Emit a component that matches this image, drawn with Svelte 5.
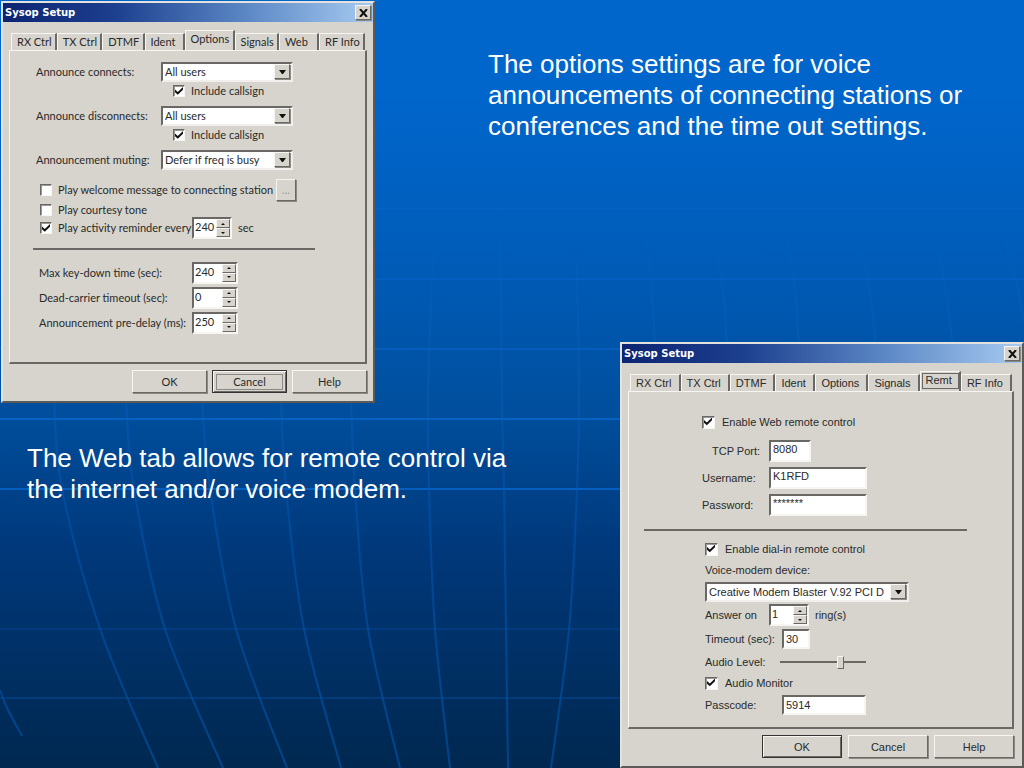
<script>
  const optionTabs = ['RX Ctrl', 'TX Ctrl', 'DTMF', 'Ident', 'Options', 'Signals', 'Web', 'RF Info'];
  const remoteTabs = ['RX Ctrl', 'TX Ctrl', 'DTMF', 'Ident', 'Options', 'Signals', 'Remt', 'RF Info'];

  let optionTab = $state('Options');
  let remoteTab = $state('Remt');

  let options = $state({
    connects: 'All users',
    connectsCall: true,
    disconnects: 'All users',
    disconnectsCall: true,
    muting: 'Defer if freq is busy',
    welcome: false,
    courtesy: false,
    reminder: true,
    reminderSec: 240,
    keyDown: 240,
    deadCarrier: 0,
    preDelay: 250
  });

  let remote = $state({
    web: true,
    port: '8080',
    username: 'K1RFD',
    password: '*******',
    dialIn: true,
    device: 'Creative Modem Blaster V.92 PCI D',
    rings: 1,
    timeout: '30',
    level: 72,
    monitor: true,
    passcode: '5914'
  });

  // background grid
  const rows = [
    { y: 140, o: 0.1 }, { y: 209, o: 0.4 }, { y: 279, o: 0.5 }, { y: 349, o: 0.6 },
    { y: 419, o: 0.8 }, { y: 489, o: 0.8 }, { y: 629, o: 0.2 }, { y: 698, o: 0.25 }
  ];
  const columns = [
    [[54, 400], [62, 489], [100, 629], [158, 768]],
    [[126, 400], [134, 489], [165, 629], [223, 768]],
    [[202, 400], [210, 489], [236, 629], [287, 768]],
    [[281, 400], [286, 489], [304, 629], [341, 768]],
    [[351, 400], [355, 489], [368, 629], [400, 768]],
    [[436, 220], [432, 280], [428, 400], [429, 489], [435, 629], [450, 768]],
    [[500, 200], [502, 400], [504, 489], [506, 629], [508, 768]],
    [[574, 220], [577, 280], [579, 400], [577, 489], [569, 629], [551, 768]],
    [[644, 220], [651, 280], [655, 345]],
    [[709, 220], [722, 280], [727, 345]],
    [[782, 220], [794, 280], [799, 345]],
    [[856, 220], [868, 280], [876, 345]],
    [[930, 220], [944, 280], [953, 345]],
    [[1000, 220], [1016, 280], [1024, 322]],
    [[0, 690], [7, 708], [22, 736]]
  ];

  function curve(points) {
    let d = `M${points[0]}`;
    for (let i = 0; i < points.length - 1; i++) {
      const a = points[i - 1] ?? points[i];
      const b = points[i];
      const c = points[i + 1];
      const e = points[i + 2] ?? c;
      d += ` C${b[0] + (c[0] - a[0]) / 6} ${b[1] + (c[1] - a[1]) / 6}`;
      d += ` ${c[0] - (e[0] - b[0]) / 6} ${c[1] - (e[1] - b[1]) / 6} ${c[0]} ${c[1]}`;
    }
    return d;
  }
</script>

{#snippet titleBar()}
  <header class="title-bar">
    <h2>Sysop Setup</h2>
    <button class="raised close" type="button" aria-label="Close">
      <svg viewBox="0 0 9 8" width="9" height="8"><path d="M1 0 L8 8 M8 0 L1 8" stroke="#111" stroke-width="2" /></svg>
    </button>
  </header>
{/snippet}

{#snippet tabStrip(tabs, active, focused, select)}
  <div class="tabs" role="tablist">
    {#each tabs as tab}
      <button
        class="tab"
        class:active={tab === active}
        class:focused={tab === active && focused}
        type="button"
        role="tab"
        aria-selected={tab === active}
        onclick={() => select(tab)}
      >{tab}</button>
    {/each}
  </div>
{/snippet}

{#snippet check(data, key, text)}
  <label class="check">
    <input type="checkbox" bind:checked={data[key]} />
    {text}
  </label>
{/snippet}

{#snippet combo(id, data, key, choices)}
  <div class="combo">
    <select {id} bind:value={data[key]}>
      {#each choices as choice}
        <option value={choice}>{choice}</option>
      {/each}
    </select>
    <span class="raised arrow">
      <svg viewBox="0 0 7 4" width="7" height="4"><path d="M0 0 H7 L4 4 H3 Z" fill="#111" /></svg>
    </span>
  </div>
{/snippet}

{#snippet spinner(id, data, key, narrow)}
  <div class="spinner" class:narrow>
    <input {id} type="number" bind:value={data[key]} />
    <div class="spin-buttons">
      <button class="raised" type="button" aria-label="Increase" onclick={() => data[key]++}>
        <svg viewBox="0 0 4 2" width="4" height="2"><path d="M0 2 L2 0 L4 2 Z" fill="#111" /></svg>
      </button>
      <button class="raised" type="button" aria-label="Decrease" onclick={() => data[key]--}>
        <svg viewBox="0 0 4 2" width="4" height="2"><path d="M0 0 L2 2 L4 0 Z" fill="#111" /></svg>
      </button>
    </div>
  </div>
{/snippet}

<main class="slide">
  <svg class="backdrop" viewBox="0 0 1024 768" preserveAspectRatio="none" aria-hidden="true">
    <defs>
      <linearGradient id="fade" gradientUnits="userSpaceOnUse" x1="0" y1="200" x2="0" y2="768">
        <stop offset="0" stop-color="#0b66c8" stop-opacity="0" />
        <stop offset="0.25" stop-color="#0b66c8" stop-opacity="0.3" />
        <stop offset="0.6" stop-color="#0058b4" stop-opacity="0.5" />
        <stop offset="1" stop-color="#004c98" stop-opacity="0.8" />
      </linearGradient>
    </defs>
    {#each rows as row}
      <rect x="0" y={row.y - 1} width="1024" height="2" fill="#0866cc" opacity={row.o} />
    {/each}
    {#each columns as points}
      <path d={curve(points)} fill="none" stroke="url(#fade)" stroke-width="2" />
    {/each}
  </svg>

  <div class="left">
    <section class="dialog options">
      {@render titleBar()}
      <div class="body">
        {@render tabStrip(optionTabs, optionTab, false, (t) => (optionTab = t))}
        <div class="panel">
          <div class="row">
            <label for="connects">Announce connects:</label>
            {@render combo('connects', options, 'connects', ['All users', 'None'])}
          </div>
          <div class="row sub">{@render check(options, 'connectsCall', 'Include callsign')}</div>
          <div class="row">
            <label for="disconnects">Announce disconnects:</label>
            {@render combo('disconnects', options, 'disconnects', ['All users', 'None'])}
          </div>
          <div class="row sub">{@render check(options, 'disconnectsCall', 'Include callsign')}</div>
          <div class="row">
            <label for="muting">Announcement muting:</label>
            {@render combo('muting', options, 'muting', ['Defer if freq is busy', 'None'])}
          </div>

          <div class="row welcome">
            {@render check(options, 'welcome', 'Play welcome message to connecting station')}
            <button class="raised browse" type="button" disabled>...</button>
          </div>
          <div class="row courtesy">{@render check(options, 'courtesy', 'Play courtesy tone')}</div>
          <div class="row reminder">
            {@render check(options, 'reminder', 'Play activity reminder every')}
            {@render spinner('reminder-sec', options, 'reminderSec', true)}
            <label class="unit" for="reminder-sec">sec</label>
          </div>

          <hr />

          <div class="row timer">
            <label for="key-down">Max key-down time (sec):</label>
            {@render spinner('key-down', options, 'keyDown', false)}
          </div>
          <div class="row timer">
            <label for="dead-carrier">Dead-carrier timeout (sec):</label>
            {@render spinner('dead-carrier', options, 'deadCarrier', false)}
          </div>
          <div class="row timer">
            <label for="pre-delay">Announcement pre-delay (ms):</label>
            {@render spinner('pre-delay', options, 'preDelay', false)}
          </div>
        </div>
        <footer>
          <button class="raised" type="button">OK</button>
          <button class="raised default" type="button"><span class="focus">Cancel</span></button>
          <button class="raised" type="button">Help</button>
        </footer>
      </div>
    </section>

    <p class="note">The Web tab allows for remote control via the internet and/or voice modem.</p>
  </div>

  <div class="right">
    <p class="note">The options settings are for voice announcements of connecting stations or conferences and the time out settings.</p>

    <section class="dialog remote">
      {@render titleBar()}
      <div class="body">
        {@render tabStrip(remoteTabs, remoteTab, true, (t) => (remoteTab = t))}
        <div class="panel">
          <div class="row">{@render check(remote, 'web', 'Enable Web remote control')}</div>
          <div class="row field">
            <label class="right-label" for="port">TCP Port:</label>
            <input class="text short" id="port" type="text" bind:value={remote.port} />
          </div>
          <div class="row field">
            <label for="username">Username:</label>
            <input class="text long" id="username" type="text" bind:value={remote.username} />
          </div>
          <div class="row field">
            <label for="password">Password:</label>
            <input class="text long" id="password" type="text" bind:value={remote.password} />
          </div>

          <hr />

          <div class="dial-in">
            <div class="row slim">{@render check(remote, 'dialIn', 'Enable dial-in remote control')}</div>
            <div class="row"><label for="device">Voice-modem device:</label></div>
            <div class="row device">
              {@render combo('device', remote, 'device', ['Creative Modem Blaster V.92 PCI D'])}
            </div>
            <div class="row answer">
              <label for="rings">Answer on</label>
              {@render spinner('rings', remote, 'rings', true)}
              <label class="unit" for="rings">ring(s)</label>
            </div>
            <div class="row wide">
              <label for="timeout">Timeout (sec):</label>
              <input class="text tiny" id="timeout" type="text" bind:value={remote.timeout} />
            </div>
            <div class="row level">
              <label for="level">Audio Level:</label>
              <input class="slider" id="level" type="range" min="0" max="100" bind:value={remote.level} />
            </div>
            <div class="row slim">{@render check(remote, 'monitor', 'Audio Monitor')}</div>
            <div class="row wide">
              <label for="passcode">Passcode:</label>
              <input class="text medium" id="passcode" type="text" bind:value={remote.passcode} />
            </div>
          </div>
        </div>
        <footer>
          <button class="raised default" type="button">OK</button>
          <button class="raised" type="button">Cancel</button>
          <button class="raised" type="button">Help</button>
        </footer>
      </div>
    </section>
  </div>
</main>

<style>
  :global(body) {
    margin: 0;
    background: #002850;
  }

  .slide {
    position: relative;
    box-sizing: border-box;
    min-height: 100vh;
    display: grid;
    /* the two halves share the middle strip */
    grid-template-columns: minmax(0, 1fr) 48px minmax(0, 1fr);
    background: linear-gradient(#0066cc 0%, #0066cc 12%, #005cb8 34%, #004f9e 53%, #00387a 72%, #002850 100%);
    font-family: "Liberation Sans", Arial, sans-serif;
    overflow: hidden;
  }

  .backdrop {
    position: absolute;
    inset: 0;
    width: 100%;
    height: 100%;
  }

  .left,
  .right {
    position: relative;
    grid-row: 1;
    display: flex;
    flex-direction: column;
  }

  .left {
    grid-column: 1 / 3;
  }

  .right {
    grid-column: 2 / 4;
    justify-content: space-between;
  }

  .note {
    margin: 0;
    color: #fff;
    font-size: 26px;
    line-height: 31px;
  }

  .left .note {
    padding: 40px 8px 0 27px;
  }

  .right .note {
    padding: 49px 40px 0 0;
  }

  /* dialogs */
  .dialog {
    border: 2px solid;
    border-color: #e4e2dc #5c5a56 #5c5a56 #e4e2dc;
    background: #d6d4cd;
    color: #2a2a2a;
    font: 11px/14px "Liberation Sans", Arial, sans-serif;
  }

  .dialog.options {
    margin: 1px 161px 0 1px;
    font-family: Lato, "Liberation Sans", sans-serif;
  }

  .dialog.remote {
    margin-left: 132px;
  }

  .dialog button,
  .dialog input,
  .dialog select {
    font: inherit;
    color: inherit;
    box-sizing: border-box;
    margin: 0;
  }

  .title-bar {
    display: flex;
    align-items: center;
    justify-content: space-between;
    height: 19px;
    padding: 0 2px;
    background: linear-gradient(90deg, #0c2472 0%, #1c3f8e 30%, #5a86c4 65%, #a6caf0 100%);
  }

  .title-bar h2 {
    margin: 0;
    color: #fff;
    font: bold 10px "DejaVu Sans", Verdana, sans-serif;
  }

  .raised {
    border: 1px solid;
    border-color: #f6f5f2 #6a6864 #6a6864 #f6f5f2;
    box-shadow: 1px 1px 0 #8c8a85;
    background: #d6d4cd;
    padding: 0;
    display: flex;
    align-items: center;
    justify-content: center;
  }

  .close {
    width: 16px;
    height: 15px;
  }

  .body {
    padding: 8px 6px 8px;
  }

  .tabs {
    display: flex;
    align-items: flex-end;
    padding: 0 2px;
  }

  .tab {
    flex: 1 1 auto;
    min-width: 40px;
    height: 17px;
    padding: 0 1px 0 5px;
    border: 1px solid #f6f5f2;
    border-right: 2px solid #6a6864;
    border-bottom: 0;
    background: none;
    text-align: left;
    white-space: nowrap;
  }

  .tab.active {
    height: 20px;
    padding-bottom: 4px;
    background: #d6d4cd;
  }

  .tab.focused {
    outline: 1px solid #6a6864;
    outline-offset: -3px;
  }

  .panel {
    border: 1px solid #f6f5f2;
    border-right: 2px solid #6a6864;
    border-bottom: 2px solid #6a6864;
  }

  .row {
    display: flex;
    align-items: center;
    height: 22px;
    white-space: nowrap;
  }

  .check {
    display: flex;
    align-items: center;
    gap: 6px;
  }

  .check input {
    appearance: none;
    flex: none;
    width: 12px;
    height: 12px;
    border: 1px solid;
    border-color: #6a6864 #f6f5f2 #f6f5f2 #6a6864;
    box-shadow: inset 1px 1px 0 #9a9894;
    background: #fff;
  }

  .check input:checked::before {
    content: '';
    display: block;
    width: 8px;
    height: 8px;
    margin: 1px;
    background: #111;
    clip-path: polygon(0 30%, 35% 62%, 100% 0, 100% 35%, 35% 98%, 0 65%);
  }

  .combo {
    display: flex;
    align-items: stretch;
    position: relative;
    height: 20px;
    width: 132px;
    box-sizing: border-box;
    border: 2px solid;
    border-color: #6a6864 #f0efec #f0efec #6a6864;
    background: #fff;
  }

  .combo select {
    appearance: none;
    width: 100%;
    border: 0;
    padding: 0 16px 0 2px;
    background: none;
  }

  .combo .arrow {
    position: absolute;
    top: 0;
    right: 1px;
    bottom: 1px;
    width: 14px;
    pointer-events: none;
  }

  .text,
  .spinner {
    border: 2px solid;
    border-color: #6a6864 #f6f5f2 #f6f5f2 #6a6864;
    background: #fff;
  }

  .text {
    height: 22px;
    padding: 0 2px 3px;
  }

  .spinner {
    display: flex;
    box-sizing: border-box;
    width: 46px;
    height: 22px;
  }

  .spinner.narrow {
    width: 40px;
  }

  .spinner input {
    appearance: textfield;
    flex: 1;
    min-width: 0;
    width: 0;
    padding: 0 0 2px 1px;
    border: 0;
    background: none;
  }

  .spinner input::-webkit-inner-spin-button {
    display: none;
  }

  .spin-buttons {
    display: flex;
    flex-direction: column;
    width: 14px;
  }

  .spin-buttons button {
    flex: 1;
    box-shadow: none;
  }

  .unit {
    margin-left: 6px;
  }

  hr {
    height: 2px;
    border: 0;
    background: #6a6864;
  }

  footer {
    display: flex;
    justify-content: flex-end;
    gap: 5px;
    margin-top: 6px;
  }

  footer button {
    width: 75px;
    height: 23px;
  }

  footer .default {
    border-color: #333;
    box-shadow: inset 1px 1px 0 #f6f5f2, inset -1px -1px 0 #6a6864;
  }

  .focus {
    flex: 1;
    margin: 0 3px;
    border: 1px solid #8c8a85;
  }

  /* options dialog */
  .options .panel {
    padding: 10px 50px 27px 23px;
  }

  .options .row > label:first-child:not(.check) {
    width: 125px;
    margin-left: 3px;
  }

  .options .sub {
    height: 16px;
    margin-bottom: 6px;
    padding-left: 140px;
  }

  .options .welcome {
    height: 24px;
    margin-top: 7px;
    padding-left: 7px;
  }

  .options .welcome .check {
    width: 236px;
  }

  .browse {
    width: 20px;
    height: 22px;
    margin-left: 4px;
  }

  .dialog .browse {
    color: #9a9894;
  }

  .options .courtesy {
    height: 16px;
    padding-left: 7px;
  }

  .options .reminder {
    height: 20px;
    padding-left: 7px;
  }

  .options .reminder .check {
    width: 152px;
  }

  .options hr {
    margin: 10px 0;
  }

  .options .timer {
    height: 25px;
  }

  .options .row.timer > label:first-child:not(.check) {
    width: 153px;
    margin-left: 6px;
  }

  /* remote dialog */
  .remote .body {
    padding-right: 8px;
  }

  .remote .panel {
    padding: 19px 45px 10px 15px;
  }

  .remote .panel > .row {
    padding-left: 58px;
  }

  .remote .check {
    gap: 7px;
  }

  .remote .check input {
    width: 13px;
    height: 13px;
  }

  .remote .row.field {
    height: 27px;
  }

  .remote .row.field:nth-child(2) {
    margin-top: 4px;
  }

  .remote .field label {
    width: 67px;
  }

  .remote .field .right-label {
    width: 57px;
    padding-left: 10px;
  }

  .short {
    width: 42px;
  }

  .long {
    width: 98px;
  }

  .medium {
    width: 84px;
  }

  .tiny {
    width: 28px;
  }

  .remote hr {
    margin: 11px 0 8px;
  }

  .dial-in {
    padding-left: 61px;
  }

  .dial-in .slim {
    height: 20px;
  }

  .dial-in .device .combo {
    width: 204px;
  }

  .dial-in .answer {
    height: 24px;
  }

  .dial-in .answer label:first-child {
    width: 64px;
  }

  .dial-in .wide {
    height: 24px;
  }

  .dial-in .wide label {
    width: 77px;
  }

  .dial-in .wide input {
    height: 20px;
    padding-bottom: 0;
  }

  .dial-in .level label {
    width: 75px;
  }

  .slider {
    appearance: none;
    width: 86px;
    height: 14px;
    background: linear-gradient(#6a6864, #6a6864) center / 100% 2px no-repeat;
  }

  .slider::-webkit-slider-thumb {
    appearance: none;
    width: 7px;
    height: 13px;
    border: 1px solid;
    border-color: #f6f5f2 #6a6864 #6a6864 #f6f5f2;
    background: #d6d4cd;
  }

  .remote footer {
    gap: 6px;
  }

  .remote footer button {
    width: 80px;
  }
</style>
